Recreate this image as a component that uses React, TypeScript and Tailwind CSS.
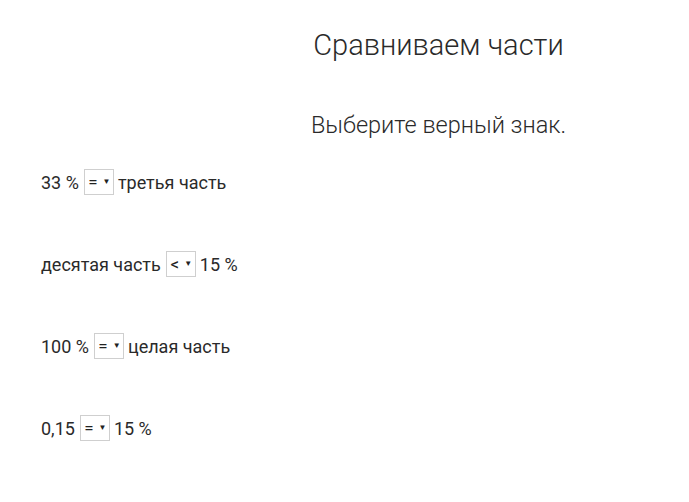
const rows = [
  { left: "33 %", sign: "=", right: "третья часть" },
  { left: "десятая часть", sign: "<", right: "15 %" },
  { left: "100 %", sign: "=", right: "целая часть" },
  { left: "0,15", sign: "=", right: "15 %" },
];

function SignSelect({ sign }: { sign: string }) {
  return (
    <span className="inline-flex h-[26px] w-[30px] items-center justify-center gap-[5px] border border-[#cfcfcf] bg-white pl-[1px] text-[17px] leading-none text-[#222]">
      <span>{sign}</span>
      <span className="text-[8px]">▼</span>
    </span>
  );
}

export default function App() {
  return (
    <div className="min-h-[502px] w-[689px] bg-white font-['Roboto',sans-serif] text-[#2a2a2a]">
      <div className="pl-[188px] pt-[26px] text-center">
        <h1 className="text-[29px] font-light leading-[38px]">Сравниваем части</h1>
        <p className="mt-[46px] text-[23.5px] font-light leading-[30px]">Выберите верный знак.</p>
      </div>
      <div className="mt-[29px] flex flex-col gap-[56px] pl-[41px]">
        {rows.map((r) => (
          <div key={r.left + r.right} className="flex h-[26px] items-center text-[18px]">
            <span>{r.left}</span>
            <span className="ml-[5px] mr-[4px] flex">
              <SignSelect sign={r.sign} />
            </span>
            <span>{r.right}</span>
          </div>
        ))}
      </div>
    </div>
  );
}
